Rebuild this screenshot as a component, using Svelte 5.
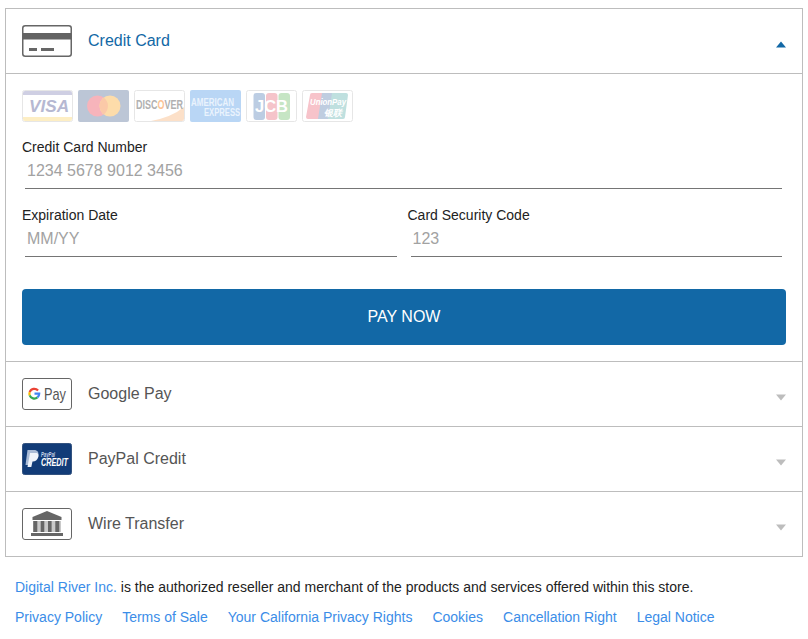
<script>
  const links = ['Privacy Policy', 'Terms of Sale', 'Your California Privacy Rights', 'Cookies', 'Cancellation Right', 'Legal Notice']
</script>

{#snippet caret(up)}
  <svg class="caret" class:up width="10" height="7" viewBox="0 0 10 7">
    <path d={up ? 'M5 0.5 L10 6.5 H0 Z' : 'M0 0.5 H10 L5 6.5 Z'} />
  </svg>
{/snippet}

<div class="page">
  <div class="accordion">
    <section class="method">
      <button class="method-head open">
        <span class="method-icon">
          <svg width="50" height="32" viewBox="0 0 50 32">
            <rect x="0.75" y="0.75" width="48.5" height="30.5" rx="2.5" fill="#fff" stroke="#666" stroke-width="1.5" />
            <rect x="1" y="8" width="48" height="6.500" fill="#636363" />
            <rect x="7" y="23" width="8" height="3" fill="#666" />
            <rect x="19" y="23" width="13" height="3" fill="#666" />
          </svg>
        </span>
        <span class="method-name">Credit Card</span>
        {@render caret(true)}
      </button>

      <div class="method-body">
        <div class="cards">
          <svg width="51" height="32" viewBox="0 0 51 32">
            <rect x="0.5" y="0.5" width="50" height="31" rx="2" fill="#fff" stroke="#e6e6e6" />
            <path d="M1 3 a2 2 0 0 1 2-2 h45 a2 2 0 0 1 2 2 v2 H1 Z" fill="#cfcfe3" />
            <path d="M1 27 H50 v2 a2 2 0 0 1 -2 2 H3 a2 2 0 0 1 -2-2 Z" fill="#fdeec4" />
            <text transform="translate(7 21.500) scale(1.010 1)" class="visa">VISA</text>
          </svg>
          <svg width="51" height="32" viewBox="0 0 51 32">
            <rect width="51" height="32" rx="2" fill="#bcc6d6" />
            <circle cx="19.500" cy="16" r="10.500" fill="#f7b4bb" />
            <circle cx="32" cy="16" r="10.500" fill="#fddcaa" />
            <path d="M25.750 7.600 a10.500 10.500 0 0 1 0 16.800 a10.500 10.500 0 0 1 0-16.800 Z" fill="#fbc9a8" />
          </svg>
          <svg width="51" height="32" viewBox="0 0 51 32">
            <rect x="0.5" y="0.5" width="50" height="31" rx="2" fill="#fff" stroke="#e6e6e6" />
            <path d="M17 31 Q38 27 50 17 V29 a2 2 0 0 1 -2 2 Z" fill="#fce0c8" />
            <text transform="translate(2 18.500) scale(0.720 1)" class="discover">DISC<tspan fill="#fbc396">O</tspan>VER</text>
          </svg>
          <svg width="51" height="32" viewBox="0 0 51 32">
            <rect width="51" height="32" rx="2" fill="#b9d6f5" />
            <text transform="translate(1 15.500) scale(0.760 1)" class="amex">AMERICAN</text>
            <text transform="translate(14 26) scale(0.730 1)" class="amex">EXPRESS</text>
          </svg>
          <svg width="51" height="32" viewBox="0 0 51 32">
            <rect x="0.5" y="0.5" width="50" height="31" rx="2" fill="#fff" stroke="#e6e6e6" />
            <rect x="7.5" y="3" width="11.5" height="27" rx="3" fill="#bccde3" />
            <rect x="20" y="3" width="11.5" height="27" rx="3" fill="#f5c4ca" />
            <rect x="32.5" y="3" width="11.5" height="27" rx="3" fill="#c6e5c4" />
            <text x="9" y="22" textLength="33" lengthAdjust="spacingAndGlyphs" class="jcb">JCB</text>
          </svg>
          <svg width="51" height="32" viewBox="0 0 51 32">
            <rect x="0.5" y="0.5" width="50" height="31" rx="2" fill="#fff" stroke="#e6e6e6" />
            <path d="M10 3 H24 L20 29 H6 a2 2 0 0 1 -2-2 L8 5 a2 2 0 0 1 2-2 Z" fill="#f7c3ca" />
            <path d="M20 3 H34 L30 29 H16 Z" fill="#bfcde0" />
            <path d="M30 3 H44 a2 2 0 0 1 2 2 L43 27 a2 2 0 0 1 -2 2 H26 Z" fill="#bfe0df" />
            <text x="8" y="15" textLength="36" lengthAdjust="spacingAndGlyphs" class="union">UnionPay</text>
            <text x="31" y="26" text-anchor="middle" class="union-cn">银联</text>
          </svg>
        </div>

        <label class="field number">
          <span class="field-label">Credit Card Number</span>
          <input placeholder="1234 5678 9012 3456" />
        </label>

        <div class="field-row">
          <label class="field">
            <span class="field-label">Expiration Date</span>
            <input placeholder="MM/YY" />
          </label>
          <label class="field">
            <span class="field-label">Card Security Code</span>
            <input placeholder="123" />
          </label>
        </div>

        <button class="pay">PAY NOW</button>
      </div>
    </section>

    <section class="method">
      <button class="method-head">
        <span class="method-icon">
          <svg width="50" height="32" viewBox="0 0 50 32">
            <rect x="0.5" y="0.5" width="49" height="31" rx="2.5" fill="#fff" stroke="#666" />
            <g fill="none" stroke-width="2.2">
              <path d="M7.7 14.02 A4.9 4.9 0 0 1 16.05 12.55" stroke="#ea4335" />
              <path d="M7.7 17.38 A4.9 4.9 0 0 1 7.7 14.02" stroke="#fbbc05" />
              <path d="M15.45 19.45 A4.9 4.9 0 0 1 7.7 17.38" stroke="#34a853" />
              <path d="M12.5 15.7 H17.2 A4.9 4.9 0 0 1 15.45 19.45" stroke="#4285f4" />
            </g>
            <text x="22" y="21.500" textLength="22" lengthAdjust="spacingAndGlyphs" class="gpay">Pay</text>
          </svg>
        </span>
        <span class="method-name">Google Pay</span>
        {@render caret(false)}
      </button>
    </section>

    <section class="method">
      <button class="method-head">
        <span class="method-icon">
          <svg width="50" height="32" viewBox="0 0 50 32">
            <rect x="0.5" y="0.5" width="49" height="31" rx="2" fill="#123c78" stroke="#33527f" />
            <path d="M5.500 7 H12 C15.500 7 17 9.500 16.300 12 C15.600 15 13 16.500 10.500 16.500 H9 L8 22 H3.500 Z" fill="#a9bbd6" />
            <path d="M8 10 H14 C16.500 10 17 12.500 16.300 14 C15.500 17 13 18.500 11 18.500 H10.500 L9.300 24 H5.500 Z" fill="#eef3fa" />
            <text x="19" y="13.500" textLength="14" lengthAdjust="spacingAndGlyphs" class="pp-small">PayPal</text>
            <text transform="translate(19 23) scale(0.660 1)" class="pp-big">CREDIT</text>
          </svg>
        </span>
        <span class="method-name">PayPal Credit</span>
        {@render caret(false)}
      </button>
    </section>

    <section class="method">
      <button class="method-head">
        <span class="method-icon">
          <svg width="50" height="32" viewBox="0 0 50 32">
            <rect x="0.5" y="0.5" width="49" height="31" rx="2.5" fill="#fff" stroke="#666" />
            <path d="M25 3 L39.500 9 V12 H10.500 V9 Z" fill="#666" />
            <rect x="11" y="13" width="28" height="11" fill="#c9c9c9" />
            <rect x="11.300" y="13" width="4" height="11" fill="#666" />
            <rect x="18.700" y="13" width="3.600" height="11" fill="#666" />
            <rect x="26" y="13" width="3.600" height="11" fill="#666" />
            <rect x="33.300" y="13" width="4" height="11" fill="#666" />
            <rect x="9" y="25" width="32" height="3" fill="#666" />
          </svg>
        </span>
        <span class="method-name">Wire Transfer</span>
        {@render caret(false)}
      </button>
    </section>
  </div>

  <footer>
    <p class="legal"><a href="#top">Digital River Inc.</a> is the authorized reseller and merchant of the products and services offered within this store.</p>
    <nav>
      {#each links as link}
        <a href="#top">{link}</a>
      {/each}
    </nav>
  </footer>
</div>

<style>
  :global(body) {
    margin: 0;
    background: #fff;
    font-family: "Liberation Sans", Arial, sans-serif;
    font-size: 14px;
    color: #222;
  }

  .page {
    padding: 8px 5px 0;
    width: 798px;
  }

  .accordion {
    border: 1px solid #bdbdbd;
    border-bottom: 0;
  }

  .method {
    border-bottom: 1px solid #bdbdbd;
  }

  .method-head {
    display: flex;
    align-items: center;
    width: 100%;
    height: 64px;
    padding: 0 16px;
    border: 0;
    background: none;
    font: inherit;
    text-align: left;
  }

  .method-icon {
    display: flex;
    width: 50px;
    height: 32px;
    margin-right: 16px;
  }

  .method-name {
    flex: 1;
    font-size: 16px;
    color: #555;
  }

  .open {
    border-bottom: 1px solid #bdbdbd;
    height: 65px;
  }

  .open .method-name {
    color: #1268a6;
  }

  .caret {
    margin-top: 6px;
    fill: #bdbdbd;
  }

  .caret.up {
    margin-top: 7px;
    fill: #1268a6;
  }

  .method-body {
    padding: 16px;
  }

  .cards {
    display: flex;
    gap: 5px;
    height: 32px;
  }

  .cards svg {
    display: block;
  }

  .cards text {
    font-family: "Liberation Sans", Arial, sans-serif;
  }

  .visa {
    font-size: 17px;
    font-weight: 700;
    font-style: italic;
    fill: #b6b8d2;
  }

  .discover {
    font-size: 12.5px;
    font-weight: 700;
    fill: #b0b0b0;
  }

  .amex {
    font-size: 10.5px;
    font-weight: 700;
    fill: #eaf3fd;
  }

  .jcb {
    font-size: 17px;
    font-weight: 700;
    fill: #fff;
  }

  .union {
    font-size: 9px;
    font-weight: 700;
    font-style: italic;
    fill: #fff;
  }

  .union-cn {
    font-family: "Noto Sans CJK SC", sans-serif;
    font-size: 9px;
    font-weight: 700;
    font-style: italic;
    fill: #fff;
  }

  .field {
    display: block;
    flex: 1;
    min-width: 0;
  }

  .number {
    margin: 17px 4px 0 0;
  }

  .field-label {
    display: block;
    height: 16px;
    line-height: 16px;
    font-size: 14px;
    color: #222;
  }

  .field input {
    display: block;
    box-sizing: border-box;
    width: calc(100% - 3px);
    height: 34px;
    margin-left: 3px;
    padding: 0 2px 1px;
    border: 0;
    border-bottom: 1px solid #757575;
    outline: 0;
    font: inherit;
    font-size: 16px;
    background: none;
  }

  .field input::placeholder {
    color: #a2a2a2;
    opacity: 1;
  }

  .field-row {
    display: flex;
    gap: 11px;
    margin-top: 18px;
    padding-right: 4px;
  }

  .pay {
    display: block;
    width: 100%;
    height: 56px;
    margin-top: 32px;
    border: 0;
    border-radius: 4px;
    background: #1268a6;
    color: #fff;
    font: inherit;
    font-size: 16px;
  }

  .gpay {
    font-size: 17px;
    font-family: "Liberation Sans", Arial, sans-serif;
    fill: #555;
  }

  .pp-small {
    font-size: 6.5px;
    font-style: italic;
    font-weight: 700;
    fill: #c9d6ea;
    font-family: "Liberation Sans", Arial, sans-serif;
  }

  .pp-big {
    font-size: 11px;
    font-style: italic;
    font-weight: 700;
    fill: #fff;
    font-family: "Liberation Sans", Arial, sans-serif;
  }

  footer {
    padding: 22px 10px 0;
  }

  .legal {
    margin: 0;
    line-height: 16px;
  }

  nav {
    display: flex;
    gap: 20px;
    margin-top: 14px;
    line-height: 16px;
  }

  a {
    color: #3b8de8;
    text-decoration: none;
  }
</style>
